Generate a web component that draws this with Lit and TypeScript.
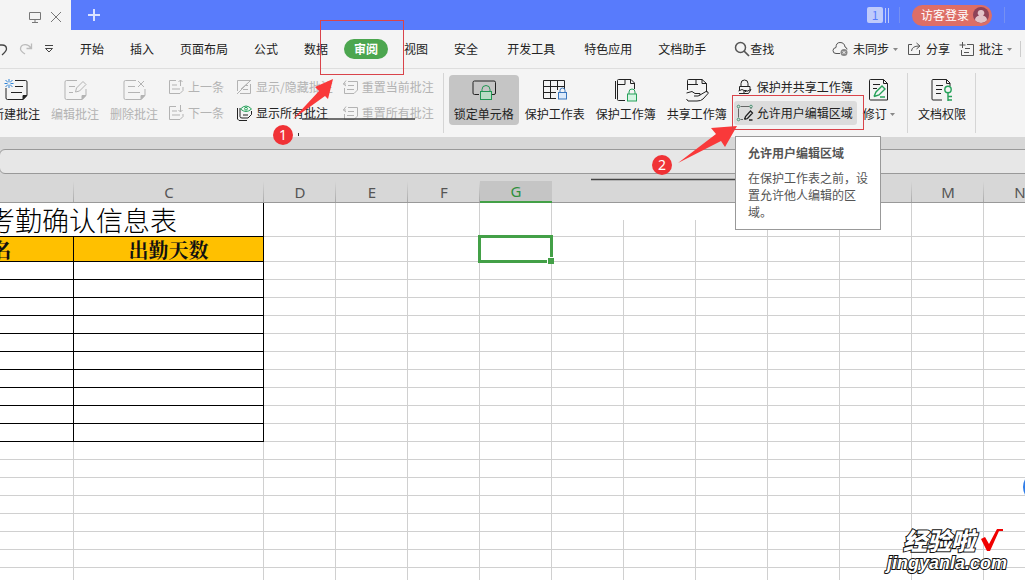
import { LitElement, html, css, svg, nothing } from "lit";
import { customElement } from "lit/decorators.js";
import { classMap } from "lit/directives/class-map.js";

const icon = (w: number, h: number, body: unknown) =>
  html`<svg class="icon" width=${w} height=${h} viewBox="0 0 ${w} ${h}" aria-hidden="true">${body}</svg>`;

const icons = {
  monitor: icon(12, 12, svg`<path d="M.5 1.500H11.500V8.500H.5ZM6 8.500V11.500M3 11.500H9"/>`),
  close: icon(12, 12, svg`<path d="M1 1L11 11M11 1L1 11"/>`),
  plus: icon(12, 12, svg`<path stroke-width="2" d="M6 0V12M0 6H12"/>`),
  undo: icon(8, 14, svg`<path stroke-width="1.300" d="M0 3H2Q6.500 3 6.500 7Q6.500 9 2 13"/>`),
  redo: icon(14, 14, svg`<path stroke-width="1.300" d="M12.500 1.500V6.500H7.500M12 6Q9.500 2.500 6 2.700Q1.500 3 1.500 7Q1.500 9 6 12"/>`),
  more: icon(10, 10, svg`<path d="M1 1.500H9M1.500 4.500H8.500L5 8Z"/>`),
  caret: icon(5, 3, svg`<path d="M0 0H5L2.500 3Z" fill="#888" stroke="none"/>`),
  search: icon(16, 16, svg`<circle cx="6.500" cy="6.500" r="5" stroke="#555" stroke-width="1.500"/><path stroke="#555" stroke-width="1.700" d="M10 10L15 15"/>`),
  cloud: icon(17, 16, svg`<path d="M8 12.500H4Q1 12.500 1 9.500Q1 7 4 6.500Q4 1.500 8 1.500Q12.500 1.500 13 6Q15 6.500 15 8.500"/><circle cx="12" cy="11.500" r="3.500" fill="#888" stroke="none"/><path d="M10.700 10.200L13.300 12.800M13.300 10.200L10.700 12.800" stroke="#fff"/>`),
  share: icon(15, 14, svg`<path d="M5 2.500H1.500V12.500H12.500V8M4.500 9Q5 4 12 4M9.500 1L13 4L9.500 7"/>`),
  note: icon(16, 15, svg`<path d="M3.500 0V6M.5 3H6.500M8 2.500H14.500V13.500H2.500V8M6 6.500H11M5 10.500H10"/>`),
  newNote: icon(26, 26, svg`<path d="M12 3.500H22.500a1.500 1.500 0 0 1 1.500 1.500V18L20 22.500H4.500a1.500 1.500 0 0 1-1.500-1.500V11M12 9.500H20M8 15.500H19"/><path d="M20 22.500V18.500H24Z" fill="currentColor"/><path stroke="#2f83d6" d="M6 2V5M6 8V11M1.500 6.500H4.500M7.500 6.500H10.500M2.500 3L5 5.500M7 7.500L9.500 10M9.500 3L7 5.500M5 7.500L2.500 10"/>`),
  editNote: icon(26, 26, svg`<path d="M15 3.500H4.500a1.500 1.500 0 0 0-1.500 1.500V21a1.500 1.500 0 0 0 1.500 1.500H20L24 18V12M7 9.500H13M7 15.500H11M13.500 15L14.500 11L21 4.500L24 7.500L17.500 14Z"/><path d="M20 22.500V18.500H24Z" fill="currentColor"/>`),
  delNote: icon(26, 26, svg`<path d="M15 3.500H4.500a1.500 1.500 0 0 0-1.500 1.500V21a1.500 1.500 0 0 0 1.500 1.500H20L24 18V12M7 9.500H14M7 15.500H19M17 4L23 10M23 4L17 10"/><path d="M20 22.500V18.500H24Z" fill="currentColor"/>`),
  prev: icon(16, 16, svg`<path d="M8 1.500H1.500V14.500H12L15 11.500V8M4 6H9M4 10H12M12.500 7V1M10.500 3L12.500 1L14.500 3"/>`),
  next: icon(16, 16, svg`<path d="M8 1.500H1.500V14.500H12L15 11.500V9M4 6H9M4 10H12M12.500 0V7M10.500 5L12.500 7L14.500 5"/>`),
  hide: icon(16, 16, svg`<path d="M1.500 12V1.500H14.500M14.500 5V14.500H4M1 15L15 1M5 10L13 3M9 6.500H12M7 10.500H12"/>`),
  showAll: icon(16, 16, svg`<path d="M1.500 3V14L3 15.500H11M4 3V11.500Q4 13 6 13H12L15.500 9.500V6M7 10H12"/><g stroke="#27a15a"><path d="M4.500 4Q10 -2 15.500 4Q10 9 4.500 4Z" fill="#eefaf2"/><circle cx="10" cy="3.700" r="1.400"/></g>`),
  reset: icon(16, 16, svg`<path d="M1 5H4M4 1.500L1.500 5L4 7M2.500 9V14.500H12L15.500 11V2.500H6M6 6.500H12M5 10.500H12"/>`),
  lockCell: icon(26, 24, svg`<path d="M8 16.500H3.500a1.500 1.500 0 0 1-1.500-1.500V4.500a1.500 1.500 0 0 1 1.500-1.500H23a1.500 1.500 0 0 1 1.500 1.500V15a1.500 1.500 0 0 1-1.500 1.500H20"/><g stroke="#219653"><path d="M11 14V11.500a4 4 0 0 1 8 0V14"/><rect x="9.500" y="13.500" width="11" height="8" fill="#b8dcc5"/></g>`),
  sheet: icon(26, 24, svg`<path d="M14 20.500H1.500V2.500H22.500V11M1.500 8.500H22.500M1.500 14.500H14M8.500 2.500V20.500M15.500 2.500V12"/><g stroke="#3976bd"><path d="M18 14V12.500a2.500 2.500 0 0 1 5 0V14"/><rect x="16.500" y="14.500" width="8" height="6.500" fill="#dceafa"/></g>`),
  book: icon(26, 26, svg`<path d="M2.500 4V22M12 23.500H5.500a1 1 0 0 1-1-1V3.500a1 1 0 0 1 1-1H18L21.500 6V12M4.500 7.500H12V2.500M17.500 2.500V6.500H21.500"/><g stroke="#27a15a"><path d="M16 17V15a3 3 0 0 1 6 0V17"/><rect x="14.500" y="17" width="9" height="7" fill="#d5f5e3"/></g>`),
  shareBook: icon(26, 26, svg`<path d="M3.500 13V3.500a1 1 0 0 1 1-1H18L22.500 6.500V15M3.500 7.500H14M12 2.500V7.500M18 2.500V6.500H22.500M2.500 16L8 14.500L11 16.500H16Q17 18.500 14 19H10M16 18L22 14.500Q25 14.500 24 16.500L19 22Q17 24 13 24H4L2.500 22"/>`),
  lockShare: icon(16, 16, svg`<path d="M4 7V4.500a3.500 3.500 0 0 1 7 0V7M2.500 11V7.500H13V11M1.500 12L5 10.500L7 11.500H9.500L8 13H6M9.500 12.500L14 10.500L11.500 14.500H2"/>`),
  region: icon(16, 16, svg`<g stroke="#4b9474"><path d="M3.500 1.500H12.500M1.500 3.500V12.500M3.500 14.500H6M14 2.500V4" stroke="#666"/><circle cx="1.500" cy="1.500" r="1.300"/><circle cx="14" cy="1.500" r="1.300"/><circle cx="1.500" cy="14.500" r="1.300"/></g><path stroke-width="1.300" d="M7.500 14.500L8.500 11.500L13.500 6L15.500 8L10.500 13.500L7.500 14.500M12 15H15.500"/>`),
  revise: icon(22, 26, svg`<path d="M15.500 2.500H2.500a1 1 0 0 0-1 1V22a1 1 0 0 0 1 1H19.500V6.500ZM15.500 2.500V6.500H19.500M5 7.500H12M5 11.500H9"/><path stroke="#27a15a" stroke-width="1.400" d="M6 19.500L8 15L14 9L17 12L11 18L6 19.500M12 20H17"/>`),
  rights: icon(24, 26, svg`<path d="M12 23H3a1 1 0 0 1-1-1V3.500a1 1 0 0 1 1-1H16.500L20 6V9M16.500 2.500V6.500H20M6 8.500H13M6 12.500H12M6 16.500H11"/><g stroke="#27a15a" stroke-width="1.400"><circle cx="18" cy="12.500" r="3.200"/><path d="M18 16V24M18 19.500H22M18 23H22"/></g>`),
};

@customElement("app-root")
export class AppRoot extends LitElement {
  static styles = css`
    :host {
      display: block;
      position: relative;
      height: 100vh;
      overflow: hidden;
      background: #fff;
      color: #222;
      font: 12px/16px "Noto Sans CJK SC", sans-serif;
    }
    * { box-sizing: border-box; }
    button {
      font: inherit;
      color: inherit;
      background: none;
      border: 0;
      padding: 0;
      display: flex;
      align-items: center;
      white-space: nowrap;
      flex: none;
    }
    .icon { display: block; flex: none; fill: none; stroke: currentColor; overflow: visible; }
    .titlebar { display: flex; align-items: center; height: 30px; background: #587bfc; padding-right: 20px; }
    .doc-tab { display: flex; align-items: center; gap: 9px; width: 71px; height: 30px; padding: 4px 0 0 29px; background: #f4f4f4; color: #777; }
    .add { margin-left: 17px; color: #d9e1ff; }
    .spacer { flex: 1; }
    .count { width: 16px; height: 16px; border-radius: 2px; background: #bfcbfb; color: #587bfc; text-align: center; }
    .bars { width: 4px; height: 15px; margin-left: 2px; border: solid #bfcbfb; border-width: 0 1px; }
    .bar-sep { width: 1px; height: 16px; background: #7590f2; }
    .bar-sep.a { margin: 0 12px 0 10px; }
    .bar-sep.b { margin-left: 12px; }
    .login { height: 21px; gap: 4px; padding: 0 3px 0 9px; border-radius: 11px; background: #dd6e66; color: #fff; }
    .menu { display: flex; align-items: center; height: 39px; border-bottom: 1px solid #dedede; background: #f4f4f4; }
    .quick { display: flex; align-items: center; gap: 11px; width: 80px; color: #444; }
    .quick .off { color: #bbb; }
    .tabs, .tabs-wide { display: flex; align-items: center; gap: 26px; }
    .tabs-wide { gap: 29px; margin: 0 26px 0 29px; }
    .active { height: 20px; margin: 0 -10px; padding: 0 10px; border-radius: 10px; background: #4ca64f; color: #fff; font-weight: 700; }
    .find { margin-left: 28px; }
    .side { display: flex; gap: 9px; padding-right: 8px; }
    .side button { gap: 4px; }
    .side .icon { stroke: #555; }
    .edge { width: 1px; height: 16px; margin-right: 4px; background: #ccc; }
    .ribbon { display: flex; align-items: flex-start; height: 68px; padding-top: 6px; background: #f4f4f4; overflow: hidden; }
    .notes { display: flex; gap: 11px; margin-left: -8px; }
    .big { flex-direction: column; height: 50px; gap: 3px; padding-top: 2px; }
    .big .icon-box { display: flex; align-items: center; height: 26px; }
    .big .label { display: flex; align-items: center; gap: 3px; }
    .off { color: #b3b3b3; }
    .pressed { width: 70px; margin: 0 6px 0 5px; border-radius: 4px; background: #c5c5c5; align-items: center; }
    .group { display: flex; gap: 11px; }
    .track { margin-right: 3px; }
    .stack { display: flex; flex-direction: column; gap: 2px; }
    .stack button { height: 24px; gap: 4px; }
    .s1 { margin-left: 10px; }
    .s2 { margin-left: 12px; }
    .s3 { margin-left: 9px; }
    .s4 { margin: 0 6px 0 7px; }
    .s4 button { padding: 0 4px 0 3px; border-radius: 3px; }
    .s4 .hover { background: #dcdcdc; }
    .sep { width: 1px; height: 60px; margin: -2px 0 0 9px; background: #d5d5d5; }
    .formula { height: 44px; padding-top: 12px; background: #d7d7d7; }
    .formula input { display: block; width: calc(100% + 12px); height: 25px; margin-left: -1px; border: 1px solid #999; border-radius: 6px; background: #e7e7e7; outline: 0; }
    .sheet { table-layout: fixed; width: 1146px; margin-left: -90px; border-spacing: 0; }
    .sheet th, .sheet td { padding: 0; border: solid #d0d0d0; border-width: 0 1px 1px 0; text-align: center; position: relative; }
    .sheet .head th { height: 22px; border-color: #999; border-right: 0; background: linear-gradient(to top, #aaa, #d7d7d7) right / 1px 100% no-repeat #d7d7d7; color: #555; font: 15px/18px "Noto Sans", sans-serif; }
    .sheet .head .wiped { background: #d7d7d7; }
    .sheet .head .current { background: #c5c5c5; border-bottom: 2px solid #43a047; color: #2f8f3c; }
    .r-title { height: 34px; }
    .r-head { height: 25px; }
    .row { height: 18px; }
    .sheet .ink { border-color: #000; }
    .sheet .title { padding-right: 8px; color: #000; font: 300 27px/33px "Noto Sans CJK SC", serif; white-space: nowrap; }
    .sheet .gold { padding-top: 1px; background: #ffc000; color: #111; font: 700 20px/23px "Noto Serif CJK SC", "Noto Sans CJK SC", serif; }
    .sheet .half { border-right: 0; background: linear-gradient(#d0d0d0, #d0d0d0) right bottom / 1px 50% no-repeat; }
    .cursor { position: absolute; z-index: 1; inset: -2px; border: 3px solid #43a047; }
    .cursor::after { content: ""; position: absolute; right: -4px; bottom: -4px; width: 6px; height: 6px; border: solid #fff; border-width: 1px 0 0 1px; background: #43a047; }
    .tip { position: absolute; z-index: 2; left: 735px; top: 136px; width: 146px; padding: 7px 12px 9px; border: 1px solid #999; background: #fff; color: #555; line-height: 17px; }
    .tip p { margin: 8px 0 0; }
    .marks { position: absolute; z-index: 2; left: 0; top: 0; }
    .frame { position: absolute; z-index: 2; border: 1px solid #d9434a; }
    .f1 { left: 320px; top: 20px; width: 84px; height: 55px; }
    .f2 { left: 732px; top: 95px; width: 132px; height: 35px; }
    .step { position: absolute; z-index: 2; width: 20px; height: 20px; border-radius: 50%; background: #f03236; color: #fff; font: 14px/20px "Noto Sans", sans-serif; text-align: center; }
    .n1 { left: 273px; top: 125px; }
    .n2 { left: 652px; top: 155px; }
    .float { position: absolute; left: 1023px; top: 471px; width: 32px; height: 32px; border-radius: 50%; background: #2f7de8; }
    .brand { position: absolute; z-index: 2; left: 887px; top: 526px; color: #fff; -webkit-text-stroke: 2px #111; paint-order: stroke fill; }
    .brand-top { display: flex; align-items: center; gap: 5px; padding-left: 16px; font: italic 900 24px/27px "Noto Sans CJK SC", sans-serif; }
    .brand-url { font: italic 700 18px/20px "Liberation Sans", sans-serif; }
  `;

  private big(name: keyof typeof icons, label: string, cls = "", drop = false) {
    return html`<button class="big ${cls}"><span class="icon-box">${icons[name]}</span><span class="label">${label}${drop ? icons.caret : nothing}</span></button>`;
  }

  private small(name: keyof typeof icons, label: string, cls = "") {
    return html`<button class=${cls}>${icons[name]}${label}</button>`;
  }

  private blank(n: number, ink: boolean) {
    return html`<tr class="row">
      ${Array.from({ length: n }, (_, i) => html`<td class=${classMap({ ink: ink && i < 2 })}></td>`)}
    </tr>`;
  }

  render() {
    const cols = ["B", "C", "D", "E", "F", "G", "", "", "", "", "", "M", "N"];
    return html`
      <header class="titlebar">
        <div class="doc-tab">${icons.monitor}<button aria-label="关闭">${icons.close}</button></div>
        <button class="add" aria-label="新建">${icons.plus}</button>
        <span class="spacer"></span>
        <span class="count">1</span><span class="bars"></span><span class="bar-sep a"></span>
        <button class="login">访客登录
          <svg class="icon" width="16" height="16" viewBox="0 0 16 16" aria-hidden="true">
            <circle cx="8" cy="8" r="8" fill="#8e4257" stroke="none" />
            <path d="M8 3a3 3 0 0 1 2 5.500Q14 9.500 14 13.300A8 8 0 0 1 2 13.300Q2 9.500 6 8.500A3 3 0 0 1 8 3Z" fill="#e2c3c8" stroke="none" />
          </svg>
        </button>
        <span class="bar-sep b"></span>
      </header>

      <nav class="menu">
        <div class="quick">
          <button aria-label="撤销">${icons.undo}</button>
          <button class="off" aria-label="恢复">${icons.redo}</button>
          <button aria-label="更多">${icons.more}</button>
        </div>
        <div class="tabs">
          ${["开始", "插入", "页面布局", "公式", "数据", "审阅", "视图", "安全"].map(
            (t) => html`<button class=${classMap({ active: t === "审阅" })}>${t}</button>`)}
        </div>
        <div class="tabs-wide"><button>开发工具</button><button>特色应用</button></div>
        <button>文档助手</button>
        <button class="find">${icons.search}查找</button>
        <span class="spacer"></span>
        <div class="side">
          <button>${icons.cloud}未同步${icons.caret}</button>
          <button>${icons.share}分享</button>
          <button>${icons.note}批注${icons.caret}</button>
        </div>
        <span class="edge"></span>
      </nav>

      <section class="ribbon">
        <div class="notes">
          ${this.big("newNote", "新建批注")}${this.big("editNote", "编辑批注", "off")}${this.big("delNote", "删除批注", "off")}
        </div>
        <div class="stack s1">${this.small("prev", "上一条", "off")}${this.small("next", "下一条", "off")}</div>
        <div class="stack s2">${this.small("hide", "显示/隐藏批注", "off")}${this.small("showAll", "显示所有批注")}</div>
        <div class="stack s3">${this.small("reset", "重置当前批注", "off")}${this.small("reset", "重置所有批注", "off")}</div>
        <span class="sep"></span>
        ${this.big("lockCell", "锁定单元格", "pressed")}
        <div class="group">
          ${this.big("sheet", "保护工作表")}${this.big("book", "保护工作簿")}${this.big("shareBook", "共享工作簿")}
        </div>
        <div class="stack s4">${this.small("lockShare", "保护并共享工作簿")}${this.small("region", "允许用户编辑区域", "hover")}</div>
        ${this.big("revise", "修订", "track", true)}
        <span class="sep"></span>
        <div class="s1">${this.big("rights", "文档权限")}</div>
        <span class="sep"></span>
      </section>

      <div class="formula"><input type="text" aria-label="编辑栏" /></div>

      <table class="sheet">
        <colgroup>
          <col style="width:164px" /><col style="width:190px" />
          ${cols.slice(2).map(() => html`<col style="width:72px" />`)}
        </colgroup>
        <thead>
          <tr class="head">
            ${cols.map((c, i) => html`<th scope="col" class=${classMap({ current: c === "G", wiped: i > 5 && i < 10 })}>${i ? c : ""}</th>`)}
          </tr>
        </thead>
        <tbody>
          <tr class="r-title">
            <td class="ink title" colspan="2">考勤确认信息表</td>
            ${cols.slice(2).map((_, i) => html`<td class=${classMap({ half: i === 4 || i === 5 })}></td>`)}
          </tr>
          <tr class="r-head">
            <td class="ink gold">姓名</td><td class="ink gold">出勤天数</td>
            ${cols.slice(2).map((c) => html`<td>${c === "G" ? html`<span class="cursor"></span>` : nothing}</td>`)}
          </tr>
          ${Array.from({ length: 18 }, (_, r) => this.blank(cols.length, r < 10))}
        </tbody>
      </table>

      <aside class="tip" role="tooltip"><strong>允许用户编辑区域</strong><p>在保护工作表之前，设置允许他人编辑的区域。</p></aside>

      <svg class="marks" width="760" height="200" viewBox="0 0 760 200" aria-hidden="true">
        <path d="M302 119H415M591 179.500H735" stroke="#444" stroke-width="1.500" />
        <path d="M298.500 133V136" stroke="#333" />
        <path d="M333 79L315 87L319 91L293 119L325 96L328 99ZM737 126L711 128L716 134L678 163L721 141L725 147Z" fill="#f9393a" />
      </svg>
      <span class="frame f1"></span><span class="frame f2"></span>
      <span class="step n1">1</span><span class="step n2">2</span>
      <span class="float"></span>

      <div class="brand">
        <div class="brand-top">经验啦
          <svg class="icon" width="24" height="24" viewBox="0 0 24 24" aria-hidden="true">
            <path d="M1 11L5 9L9 16L17 1H23V3H19L10 23H7Z" fill="#f00000" stroke="none" />
          </svg>
        </div>
        <div class="brand-url">jingyanla.com</div>
      </div>
    `;
  }
}
